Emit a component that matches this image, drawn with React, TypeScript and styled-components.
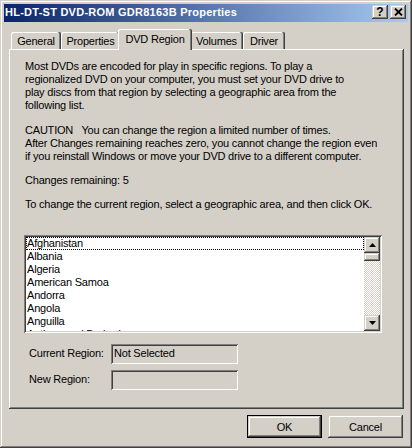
import React from "react";
import styled, { createGlobalStyle } from "styled-components";

const GlobalStyle = createGlobalStyle`
  html, body { margin: 0; padding: 0; background: #D4D0C8; }
  body {
    font-family: "Liberation Sans", Arial, sans-serif;
    font-size: 11px;
    color: #000;
    letter-spacing: -0.2px;
  }
  #root { width: 412px; height: 448px; }
`;

const raised = `
  box-shadow: inset -1px -1px #404040, inset 1px 1px #D4D0C8,
    inset -2px -2px #808080, inset 2px 2px #FFFFFF;
`;

const sunken = `
  box-shadow: inset 1px 1px #808080, inset -1px -1px #FFFFFF,
    inset 2px 2px #404040, inset -2px -2px #D4D0C8;
`;

const Window = styled.div`
  box-sizing: border-box;
  width: 412px;
  height: 448px;
  background: #d4d0c8;
  padding: 4px;
  display: flex;
  flex-direction: column;
  box-shadow: inset -1px -1px #404040, inset 1px 1px #d4d0c8,
    inset -2px -2px #808080, inset 2px 2px #ffffff;
`;

const TitleBar = styled.div`
  flex: none;
  height: 18px;
  display: flex;
  align-items: center;
  padding: 0 2px 0 1px;
  background: linear-gradient(to right, #0a246a, #a6caf0);
`;

const TitleText = styled.div`
  flex: 1;
  color: #fff;
  font-weight: bold;
  letter-spacing: 0.25px;
  line-height: 14px;
  margin-top: -3px;
  white-space: nowrap;
`;

const CaptionButton = styled.div<{ $gap?: boolean }>`
  box-sizing: border-box;
  width: 16px;
  height: 14px;
  margin-left: ${(p) => (p.$gap ? "2px" : "0")};
  margin-top: -3px;
  background: #d4d0c8;
  display: flex;
  align-items: center;
  justify-content: center;
  font-weight: bold;
  font-size: 12px;
  line-height: 14px;
  letter-spacing: 0;
  ${raised}
`;

const Body = styled.div`
  flex: 1;
  display: flex;
  flex-direction: column;
  padding: 7px 4px 6px 5px;
`;

const TabStrip = styled.div`
  flex: none;
  height: 20px;
  display: flex;
  align-items: flex-end;
  padding-left: 2px;
  position: relative;
  z-index: 1;
`;

const Tab = styled.div<{ $w: number; $active?: boolean }>`
  box-sizing: border-box;
  width: ${(p) => p.$w + (p.$active ? 4 : 0)}px;
  height: ${(p) => (p.$active ? 21 : 17)}px;
  margin: ${(p) => (p.$active ? "0 -2px -1px -2px" : "0")};
  position: relative;
  z-index: ${(p) => (p.$active ? 2 : 1)};
  background: #d4d0c8;
  display: flex;
  align-items: center;
  justify-content: center;
  padding-bottom: ${(p) => (p.$active ? "2px" : "0")};
  padding-top: ${(p) => (p.$active ? "0" : "1px")};
  border-radius: 2px 2px 0 0;
  white-space: nowrap;
  box-shadow: inset -1px 0 #404040, inset -2px 0 #808080, inset 1px 1px #ffffff;
`;

const Panel = styled.div`
  flex: none;
  box-sizing: border-box;
  height: 360px;
  padding: 11px 22px 0 15px;
  display: flex;
  flex-direction: column;
  box-shadow: inset -1px -1px #404040, inset 1px 1px #ffffff,
    inset -2px -2px #808080;
`;

const Para = styled.p<{ $mt?: number }>`
  margin: ${(p) => p.$mt ?? 0}px 0 0 1px;
  line-height: 13px;
  white-space: pre;
`;

const ListBox = styled.div`
  box-sizing: border-box;
  margin-top: 24px;
  width: 358px;
  height: 98px;
  padding: 2px;
  background: #fff;
  display: flex;
  ${sunken}
`;

const Items = styled.div`
  flex: 1;
  overflow: hidden;
`;

const Item = styled.div<{ $focus?: boolean }>`
  height: 13px;
  line-height: 13px;
  padding-left: 1px;
  white-space: nowrap;
  outline: ${(p) => (p.$focus ? "1px dotted #000" : "none")};
  outline-offset: -1px;
`;

const ScrollBar = styled.div`
  width: 16px;
  display: flex;
  flex-direction: column;
`;

const ScrollButton = styled.div<{ $h: number }>`
  height: ${(p) => p.$h}px;
  background: #d4d0c8;
  display: flex;
  align-items: center;
  justify-content: center;
  ${raised}
`;

const Track = styled.div`
  flex: 1;
  background-image: repeating-conic-gradient(#ffffff 0 25%, #d4d0c8 0 50%);
  background-size: 2px 2px;
`;

const FormGrid = styled.div`
  margin-top: 11px;
  display: grid;
  grid-template-columns: 87px 127px;
  grid-auto-rows: 20px;
  row-gap: 6px;
`;

const Label = styled.div`
  padding-left: 5px;
  display: flex;
  align-items: center;
  padding-bottom: 1px;
  line-height: 13px;
`;

const ReadBox = styled.div`
  box-sizing: border-box;
  padding: 0 0 1px 3px;
  display: flex;
  align-items: center;
  line-height: 13px;
  background: #d4d0c8;
  ${sunken}
`;

const ButtonRow = styled.div`
  flex: none;
  margin-top: 6px;
  display: flex;
  justify-content: flex-end;
  gap: 6px;
  padding-right: 1px;
`;

const PushButton = styled.div<{ $default?: boolean }>`
  box-sizing: border-box;
  width: 75px;
  height: 23px;
  display: flex;
  align-items: center;
  justify-content: center;
  background: #d4d0c8;
  border: ${(p) => (p.$default ? "1px solid #000" : "none")};
  ${raised}
`;

const ArrowUp = () => (
  <svg width="7" height="4" viewBox="0 0 7 4">
    <polygon points="3.5,0 7,4 0,4" fill="#000" />
  </svg>
);

const ArrowDown = () => (
  <svg width="7" height="4" viewBox="0 0 7 4">
    <polygon points="0,0 7,0 3.5,4" fill="#000" />
  </svg>
);

const CloseGlyph = () => (
  <svg width="9" height="8" viewBox="0 0 9 8">
    <path d="M1 0.5L8 7.5M8 0.5L1 7.5" stroke="#000" strokeWidth="1.8" />
  </svg>
);

const countries = [
  "Afghanistan",
  "Albania",
  "Algeria",
  "American Samoa",
  "Andorra",
  "Angola",
  "Anguilla",
  "Antigua and Barbuda",
];

const tabs: { label: string; w: number; active?: boolean }[] = [
  { label: "General", w: 50 },
  { label: "Properties", w: 59 },
  { label: "DVD Region", w: 70, active: true },
  { label: "Volumes", w: 53 },
  { label: "Driver", w: 42 },
];

export default function App() {
  return (
    <>
      <GlobalStyle />
      <Window>
        <TitleBar>
          <TitleText>HL-DT-ST DVD-ROM GDR8163B Properties</TitleText>
          <CaptionButton>?</CaptionButton>
          <CaptionButton $gap>
            <CloseGlyph />
          </CaptionButton>
        </TitleBar>
        <Body>
          <TabStrip>
            {tabs.map((t) => (
              <Tab key={t.label} $w={t.w} $active={t.active}>
                {t.label}
              </Tab>
            ))}
          </TabStrip>
          <Panel>
            <Para>
              {"Most DVDs are encoded for play in specific regions. To play a\nregionalized DVD on your computer, you must set your DVD drive to\nplay discs from that region by selecting a geographic area from the\nfollowing list."}
            </Para>
            <Para $mt={12}>
              {"CAUTION   You can change the region a limited number of times.\nAfter Changes remaining reaches zero, you cannot change the region even\nif you reinstall Windows or move your DVD drive to a different computer."}
            </Para>
            <Para $mt={11}>Changes remaining: 5</Para>
            <Para $mt={11}>
              To change the current region, select a geographic area, and then click OK.
            </Para>
            <ListBox>
              <Items>
                {countries.map((c, i) => (
                  <Item key={c} $focus={i === 0}>
                    {c}
                  </Item>
                ))}
              </Items>
              <ScrollBar>
                <ScrollButton $h={16}>
                  <ArrowUp />
                </ScrollButton>
                <ScrollButton $h={8} />
                <Track />
                <ScrollButton $h={16}>
                  <ArrowDown />
                </ScrollButton>
              </ScrollBar>
            </ListBox>
            <FormGrid>
              <Label>Current Region:</Label>
              <ReadBox>Not Selected</ReadBox>
              <Label>New Region:</Label>
              <ReadBox />
            </FormGrid>
          </Panel>
          <ButtonRow>
            <PushButton $default>OK</PushButton>
            <PushButton>Cancel</PushButton>
          </ButtonRow>
        </Body>
      </Window>
    </>
  );
}
